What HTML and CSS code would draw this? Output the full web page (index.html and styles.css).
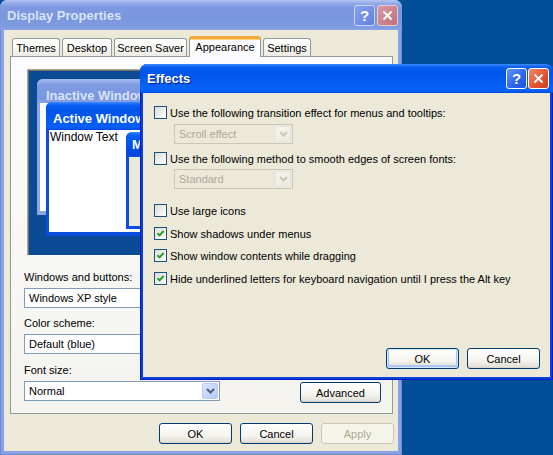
FILE: index.html
```html
<!DOCTYPE html>
<html>
<head>
<meta charset="utf-8">
<title>Display Properties</title>
<link rel="stylesheet" href="styles.css">
</head>
<body>
<div class="win dp">
  <div class="titlebar tb-inactive">
    <span class="title">Display Properties</span>
    <div class="tbtns">
      <span class="tbtn help">?</span>
      <span class="tbtn close"><svg width="11" height="11" viewBox="0 0 11 11"><path d="M1.5 1.5 L9.5 9.5 M9.5 1.5 L1.5 9.5" stroke="#fff" stroke-width="2" fill="none"/></svg></span>
    </div>
  </div>
  <div class="wbody">
    <div class="tabs">
      <div class="tab t-themes">Themes</div>
      <div class="tab t-desktop">Desktop</div>
      <div class="tab t-ss">Screen Saver</div>
      <div class="tab sel t-app">Appearance</div>
      <div class="tab t-set">Settings</div>
    </div>
    <div class="panel">
      <div class="preview">
        <div class="pw pw-inactive">
          <div class="pw-title">Inactive Window</div>
          <div class="pw-client"></div>
        </div>
        <div class="pw pw-active">
          <div class="pw-title">Active Window</div>
          <div class="pw-client"><span class="wtext">Window Text</span></div>
        </div>
        <div class="pw pw-msg">
          <div class="pw-title small">Message Box</div>
          <div class="pw-client grey"></div>
        </div>
      </div>
      <div class="lbl first">Windows and buttons:</div>
      <div class="combo wide"><span class="cval">Windows XP style</span><span class="arrow"><svg width="9" height="6" viewBox="0 0 9 6"><path d="M1 1 L4.5 4.5 L8 1" fill="none" stroke="#4d6185" stroke-width="2"/></svg></span></div>
      <div class="lbl">Color scheme:</div>
      <div class="combo wide"><span class="cval">Default (blue)</span><span class="arrow"><svg width="9" height="6" viewBox="0 0 9 6"><path d="M1 1 L4.5 4.5 L8 1" fill="none" stroke="#4d6185" stroke-width="2"/></svg></span></div>
      <div class="lbl third">Font size:</div>
      <div class="font-row">
        <div class="combo wide"><span class="cval">Normal</span><span class="arrow"><svg width="9" height="6" viewBox="0 0 9 6"><path d="M1 1 L4.5 4.5 L8 1" fill="none" stroke="#4d6185" stroke-width="2"/></svg></span></div>
        <div class="btn adv">Advanced</div>
      </div>
    </div>
    <div class="dlg-buttons">
      <div class="btn">OK</div>
      <div class="btn">Cancel</div>
      <div class="btn disabled">Apply</div>
    </div>
  </div>
</div>

<div class="win fx">
  <div class="titlebar tb-active">
    <span class="title">Effects</span>
    <div class="tbtns">
      <span class="tbtn help">?</span>
      <span class="tbtn close"><svg width="11" height="11" viewBox="0 0 11 11"><path d="M1.5 1.5 L9.5 9.5 M9.5 1.5 L1.5 9.5" stroke="#fff" stroke-width="2" fill="none"/></svg></span>
    </div>
  </div>
  <div class="wbody fxbody">
    <div class="chk-row r1"><span class="cb"></span><span>Use the following transition effect for menus and tooltips:</span></div>
    <div class="combo dis c1"><span class="cval">Scroll effect</span><span class="arrow"><svg width="9" height="6" viewBox="0 0 9 6"><path d="M1 1 L4.5 4.5 L8 1" fill="none" stroke="#c9c7ba" stroke-width="2"/></svg></span></div>
    <div class="chk-row r2"><span class="cb"></span><span>Use the following method to smooth edges of screen fonts:</span></div>
    <div class="combo dis c2"><span class="cval">Standard</span><span class="arrow"><svg width="9" height="6" viewBox="0 0 9 6"><path d="M1 1 L4.5 4.5 L8 1" fill="none" stroke="#c9c7ba" stroke-width="2"/></svg></span></div>
    <div class="chk-row r3"><span class="cb"></span><span>Use large icons</span></div>
    <div class="chk-row r4"><span class="cb"><svg width="9" height="9" viewBox="0 0 9 9"><path d="M1.5 4.2 L3.6 6.4 L7.6 2" fill="none" stroke="#21a121" stroke-width="2"/></svg></span><span>Show shadows under menus</span></div>
    <div class="chk-row r5"><span class="cb"><svg width="9" height="9" viewBox="0 0 9 9"><path d="M1.5 4.2 L3.6 6.4 L7.6 2" fill="none" stroke="#21a121" stroke-width="2"/></svg></span><span>Show window contents while dragging</span></div>
    <div class="chk-row r6"><span class="cb"><svg width="9" height="9" viewBox="0 0 9 9"><path d="M1.5 4.2 L3.6 6.4 L7.6 2" fill="none" stroke="#21a121" stroke-width="2"/></svg></span><span>Hide underlined letters for keyboard navigation until I press the Alt key</span></div>
    <div class="dlg-buttons fx-buttons">
      <div class="btn default">OK</div>
      <div class="btn">Cancel</div>
    </div>
  </div>
</div>
</body>
</html>
```

FILE: styles.css
```css
* { box-sizing: border-box; }
html, body { margin: 0; padding: 0; }
body {
  width: 553px;
  height: 455px;
  overflow: hidden;
  position: relative;
  background: #004e98;
  font: 11px "Liberation Sans", Arial, sans-serif;
  color: #000;
}

/* windows */
.win {
  position: absolute;
  display: flex;
  flex-direction: column;
  border-radius: 8px 8px 0 0;
}
.dp {
  left: 0; top: 0;
  width: 402px; height: 455px;
  background: #8aa2e4;
  box-shadow: inset 0 0 0 1px #6f8bd8;
}
.fx {
  left: 140px; top: 64px;
  width: 413px; height: 316px;
  background: #0842d9;
  box-shadow: inset 0 0 0 1px #0019cf;
}

.titlebar {
  flex: none;
  display: flex;
  align-items: center;
  border-radius: 7px 7px 0 0;
  padding: 0 4px 0 7px;
}
.title {
  font: bold 13px "Liberation Sans", Arial, sans-serif;
  flex: 1;
}
.tb-inactive {
  height: 30px;
  background: linear-gradient(#b4c6f0 0, #95acea 3px, #7d98e0 8px, #7a96df 60%, #809be1 90%, #8aa3e4 100%);
}
.tb-inactive .title { color: #d8e4f8; }
.tb-active {
  height: 29px;
  background: linear-gradient(#3d8bff 0, #0a5ff2 3px, #0055ea 8px, #0058ee 45%, #0a63f7 85%, #0660f5 93%, #0047d9 100%);
}
.tb-active .title { color: #fff; text-shadow: 1px 1px 0 #0a1883; }

.tbtns { display: flex; gap: 2px; }
.tb-active .tbtns { gap: 1px; }
.tbtn {
  width: 21px; height: 21px;
  border-radius: 3px;
  display: flex; align-items: center; justify-content: center;
  color: #fff;
  font: bold 15px "Liberation Sans", Arial, sans-serif;
}
.tb-inactive .help { background: linear-gradient(135deg, #87a3ef, #5e80e2); border: 1px solid #c7d4f5; }
.tb-inactive .close { background: linear-gradient(135deg, #d99aa3, #c0707a); border: 1px solid #e6cdd3; }
.tb-active .help { background: linear-gradient(135deg, #5f95ff, #2a63ec 60%, #1f54da); border: 1px solid #fff; }
.tb-active .close { background: linear-gradient(135deg, #f0886a, #e2532e 60%, #c83d1b); border: 1px solid #fff; }

.wbody {
  flex: 1;
  background: #ece9d8;
  margin: 0 4px 4px;
  display: flex;
  flex-direction: column;
}

/* tabs */
.tabs {
  display: flex;
  align-items: flex-end;
  gap: 2px;
  height: 20px;
  margin: 6px 0 0 8px;
  position: relative;
  z-index: 2;
}
.tab {
  height: 18px;
  border: 1px solid #919b9c;
  border-bottom: none;
  border-radius: 3px 3px 0 0;
  background: linear-gradient(#fff, #fbfbf9 40%, #eceae3);
  display: flex; align-items: center; justify-content: center;
  padding-top: 1px;
}
.t-themes { width: 48px; }
.t-desktop { width: 50px; }
.t-ss { width: 73px; }
.t-app { width: 72px; }
.t-set { width: 48px; }
.tab.sel {
  height: 21px;
  margin-bottom: -1px;
  background: #fcfcfe;
  border-top: 3px solid #f2a93b;
  box-shadow: inset 0 1px 0 #ffd87a;
  padding-top: 0;
  padding-bottom: 3px;
}

.panel {
  width: 383px;
  height: 358px;
  margin-left: 6px;
  border: 1px solid #919b9c;
  background: linear-gradient(#fcfcfe, #f4f3ee);
  padding: 12px 0 0 13px;
  display: flex;
  flex-direction: column;
  align-items: flex-start;
}

/* preview */
.preview {
  position: relative;
  margin-left: 3px;
  width: 349px;
  height: 187px;
  flex: none;
  background: #0b4a94;
  border: 1px solid;
  border-color: #aca899 #fff #fff #aca899;
  box-shadow: inset 1px 1px 0 #716f64;
  overflow: hidden;
}
.pw {
  position: absolute;
  display: flex;
  flex-direction: column;
  border-radius: 6px 6px 0 0;
}
.pw-title {
  flex: none;
  font: bold 13px "Liberation Sans", Arial, sans-serif;
  white-space: nowrap;
  overflow: hidden;
}
.pw-client { flex: 1; background: #fff; }
.pw-inactive {
  left: 9px; top: 9px;
  width: 320px; height: 136px;
  background: #8ea6e6;
}
.pw-inactive .pw-title {
  height: 24px;
  line-height: 33px;
  padding-left: 9px;
  color: #d8e4f8;
  border-radius: 6px 6px 0 0;
  background: linear-gradient(#a8bcf0, #7f9be2 25%, #7a96df 80%, #8aa3e4);
}
.pw-inactive .pw-client { margin: 0 4px 4px 3px; }
.pw-active {
  left: 18px; top: 32px;
  width: 320px; height: 134px;
  background: #0a4ee0;
}
.pw-active .pw-title {
  height: 28px;
  line-height: 34px;
  padding-left: 7px;
  color: #fff;
  border-radius: 6px 6px 0 0;
  background: linear-gradient(#3d8bff 0, #0a5ff2 3px, #0055ea 8px, #0058ee 50%, #0660f5 90%, #0047d9 100%);
}
.pw-active .pw-client {
  margin: 0 4px 4px 3px;
  padding: 1px 1px 0;
  font-size: 12px;
  line-height: 13px;
}
.wtext { display: inline-block; }
.pw-msg {
  left: 98px; top: 62px;
  width: 200px; height: 97px;
  background: #0a4ee0;
}
.pw-msg .pw-title {
  height: 23px;
  line-height: 26px;
  padding-left: 6px;
  color: #fff;
  border-radius: 6px 6px 0 0;
  background: linear-gradient(#3d8bff 0, #0a5ff2 3px, #0058ee 40%, #0047d9 100%);
}
.pw-client.grey { background: #ece9d8; margin: 2px 3px 3px; }

/* labels and combos */
.lbl { line-height: 13px; margin-top: 9px; }
.lbl.first { margin-top: 15px; }
.lbl.third { margin-top: 10px; }
.combo {
  height: 20px;
  margin-top: 4px;
  border: 1px solid #7f9db9;
  background: #fff;
  display: flex;
  align-items: center;
  padding: 1px;
}
.combo.wide { width: 196px; }
.cval { flex: 1; padding-left: 3px; white-space: nowrap; overflow: hidden; }
.arrow {
  width: 16px;
  height: 16px;
  flex: none;
  border: 1px solid #b9cbf3;
  border-radius: 2px;
  background: linear-gradient(135deg, #dce7fd, #b5c9f7);
  display: flex; align-items: center; justify-content: center;
}
.combo.dis {
  border-color: #c9c7ba;
  background: #ece9d8;
  color: #aca899;
}
.combo.dis .arrow {
  border-color: #e8e6da;
  background: linear-gradient(135deg, #f6f5ee, #ebe9df);
}

.font-row {
  display: flex;
  align-items: flex-start;
  width: 369px;
  justify-content: space-between;
  padding-right: 12px;
}
.font-row .combo { margin-top: 4px; }
.btn.adv { width: 81px; margin-top: 5px; }

/* buttons */
.btn {
  width: 73px;
  height: 21px;
  border: 1px solid #003c74;
  border-radius: 3px;
  background: linear-gradient(#fff, #f5f4ef 60%, #e3e1d8 92%, #d6d0c5);
  display: flex; align-items: center; justify-content: center;
  flex: none;
}
.btn.disabled {
  border-color: #c9c7ba;
  background: #f5f4ea;
  color: #aca899;
}
.btn.default { box-shadow: inset 0 0 0 1px #cee7ff, inset 0 -1px 0 2px #adc6f5; }
.dlg-buttons {
  display: flex;
  justify-content: flex-end;
  gap: 8px;
  margin-top: 9px;
  padding-right: 4px;
}

/* effects body */
.fxbody {
  margin: 0 3px 3px;
  padding: 13px 10px 8px 11px;
}
.chk-row {
  display: flex;
  align-items: center;
  gap: 3px;
  height: 13px;
  white-space: nowrap;
}
.cb {
  width: 13px; height: 13px;
  flex: none;
  border: 1px solid #1c5180;
  background: linear-gradient(135deg, #dcdcd7, #fff);
  display: flex; align-items: center; justify-content: center;
}
.combo.c1, .combo.c2 { width: 119px; margin-left: 20px; }
.combo.c1 { margin-top: 5px; }
.r2 { margin-top: 8px; }
.combo.c2 { margin-top: 4px; }
.r3 { margin-top: 15px; }
.r4 { margin-top: 10px; }
.r5 { margin-top: 9px; }
.r6 { margin-top: 10px; }
.fx-buttons { margin-top: auto; padding-right: 0; }
```
